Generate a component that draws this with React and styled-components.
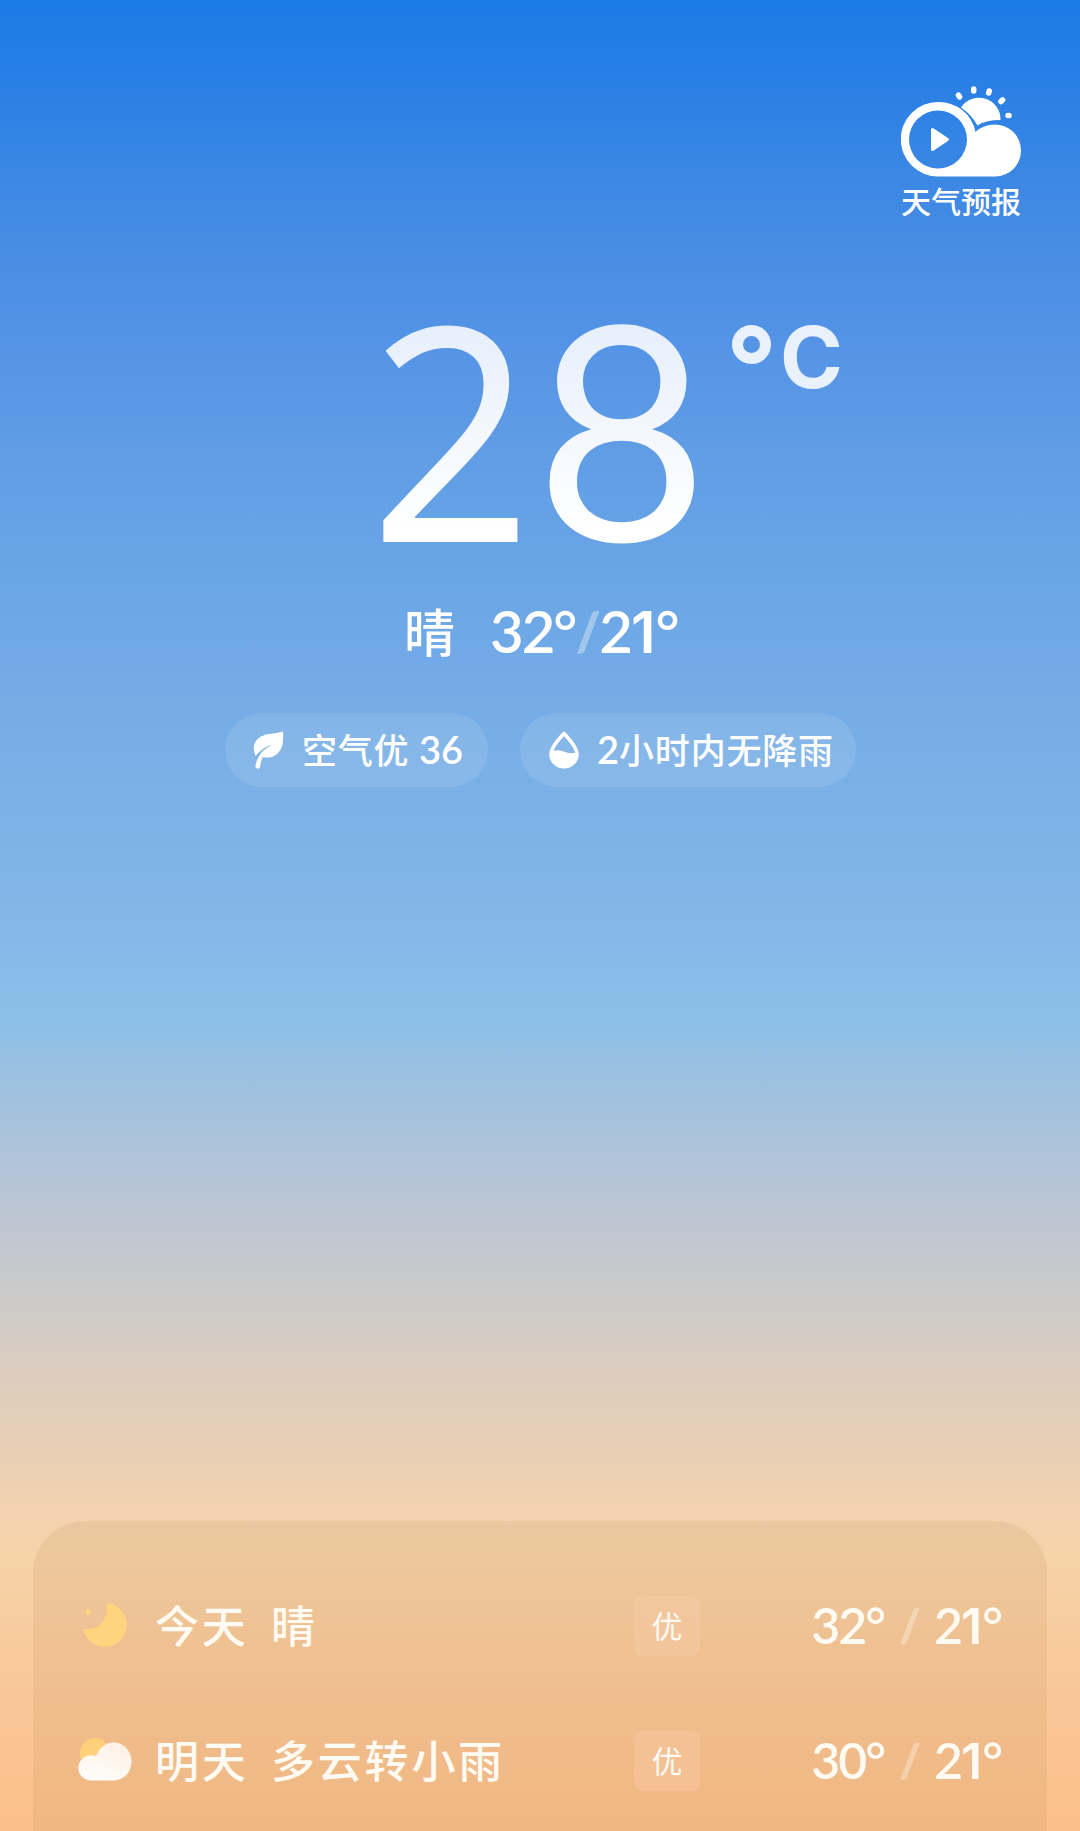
import styled, { createGlobalStyle } from "styled-components";

const GlobalStyle = createGlobalStyle`
  * {
    box-sizing: border-box;
  }
  body {
    margin: 0;
    font-family: Lato, "Noto Sans CJK SC", sans-serif;
  }
`;

const Container = styled.div`
  width: 1080px;
  height: 1831px;
  overflow: hidden;
  display: flex;
  flex-direction: column;
  color: white;
  background: linear-gradient(
    to bottom,
    #1b7be6 0px,
    #2a80e5 90px,
    #3a87e4 170px,
    #488de4 250px,
    #5594e6 345px,
    #609de5 450px,
    #6ba6e6 590px,
    #78aee6 740px,
    #82b6e7 900px,
    #8cbfe8 1020px,
    #9fc1df 1090px,
    #b0c4d8 1160px,
    #c2c7d0 1240px,
    #cccbc9 1300px,
    #dccdbf 1370px,
    #e6cfb6 1440px,
    #f2d2b0 1505px,
    #f6d3aa 1550px,
    #f9c898 1680px,
    #fbbf8b 1831px
  );
`;

const Header = styled.header`
  display: flex;
  justify-content: flex-end;
  height: 300px;
  padding: 84px 58px 0 0;
`;

const Forecast = styled.div`
  width: 121px;
  display: flex;
  flex-direction: column;
`;

const ForecastLabel = styled.span`
  margin-top: 3px;
  font-size: 30px;
  line-height: 40px;
  font-weight: 500;
  white-space: nowrap;
`;

const Current = styled.section`
  display: flex;
  height: 290px;
  padding-left: 369px;
`;

const Degrees = styled.div`
  display: flex;
  width: 351px;
`;

const BigDigit = styled.span`
  width: 166px;
  height: 264px;
  margin-top: -6px;
  font-family: ${(props) => props.$font}, sans-serif;
  font-size: 299px;
  line-height: 264px;
  white-space: nowrap;
  color: transparent;
  background: linear-gradient(to bottom, #e6effc 30px, #fff 236px);
  background-clip: text;
  transform: scaleX(${(props) => props.$stretch || 1});
  transform-origin: 14px 0;
`;

const Unit = styled.div`
  display: flex;
  padding-top: 8px;
  font-family: Inter, sans-serif;
  font-size: 85px;
  line-height: 100px;
  font-weight: 700;
  color: #e9f1fd;
`;

const Ring = styled.i`
  width: 39px;
  height: 39px;
  margin: 17px 9px 0 12px;
  border: 11px solid #e9f1fd;
  border-radius: 50%;
`;

const Summary = styled.section`
  display: flex;
  align-items: center;
  height: 86px;
  padding-left: 404px;
  font-weight: 500;
`;

const Condition = styled.span`
  width: 86px;
  font-size: 51px;
  line-height: 60px;
`;

const Range = styled.div`
  display: flex;
  font-size: ${(props) => props.$size}px;
  line-height: 70px;
  padding-bottom: ${(props) => props.$lift || 0}px;
  font-weight: 600;
  letter-spacing: -2px;
  white-space: nowrap;
`;

const One = styled.span`
  font-family: Inter, sans-serif;
  letter-spacing: 0;
`;

const Slash = styled.span`
  width: ${(props) => props.$width}px;
  font-size: 0.9em;
  font-weight: 800;
  text-align: center;
  opacity: 0.35;
`;

const Chips = styled.section`
  display: flex;
  gap: 32px;
  padding: 37px 0 0 225px;
`;

const Chip = styled.div`
  display: flex;
  align-items: center;
  width: ${(props) => props.$width}px;
  height: 74px;
  padding-left: 28px;
  border-radius: 37px;
  background-color: rgba(255, 255, 255, 0.1);
  font-size: 35px;
  line-height: 50px;
  font-weight: 500;
  letter-spacing: 0.8px;
  white-space: nowrap;

  svg {
    margin-right: 17px;
    flex-shrink: 0;
  }
`;

const ChipText = styled.span`
  margin-top: -2px;
`;

const Figure = styled.span`
  font-size: 38px;
  font-weight: 600;
  letter-spacing: 0;
`;

const Days = styled.section`
  margin: auto 33px 0;
  height: 310px;
  padding: 37px 46px 0 45px;
  border-radius: 52px 52px 0 0;
  background-color: rgba(190, 140, 85, 0.15);
  color: #fffaf2;
`;

const Day = styled.div`
  display: flex;
  align-items: center;
  height: 135px;
`;

const DayIcon = styled.div`
  width: 77px;
  height: 54px;
`;

const DayName = styled.span`
  width: 116px;
  font-size: 44px;
  line-height: 60px;
  font-weight: 500;
  letter-spacing: 2.8px;
  white-space: nowrap;
`;

const DayText = styled(DayName)`
  width: 363px;
`;

const Quality = styled.span`
  width: 66px;
  height: 60px;
  border-radius: 8px;
  background-color: rgba(255, 210, 180, 0.28);
  font-size: 31px;
  line-height: 60px;
  text-align: center;
`;

const DayRange = styled.div`
  flex: 1;
  display: flex;
  justify-content: flex-end;
`;

const ForecastLogo = () => (
  <svg width="121" height="94" viewBox="0 0 121 94" fill="#fff">
    <path d="M60 23.500A21.500 21.500 0 0 1 99.500 36Q84 36 76.500 41.500Q70 30 60 23.500Z" />
    <g stroke="#fff" strokeWidth="5.500" strokeLinecap="round">
      <path d="M57.500 11.200l1 1.600M72.700 5v2M88.200 7l-.5 2M101.500 16l-1.500 1.500M107 31.500h1" />
    </g>
    <path d="M37 18A37 37 0 0 1 74.500 48Q82 40.500 94 40.500A26 26 0 0 1 94 92.500H37A37 37 0 0 1 37 18ZM37 26.500A29 29 0 1 0 37 84.500A29 29 0 0 0 37 26.500Z" fillRule="evenodd" />
    <path d="M31.500 45.500L46.500 55.500L31.500 65.500Z" stroke="#fff" strokeWidth="3" strokeLinejoin="round" />
  </svg>
);

const Leaf = () => (
  <svg width="32" height="40" viewBox="0 0 32 40">
    <path d="M30 1.500C30.800 12 29.500 21 22 25.500C18 28 13 28 9.800 27C8.500 30 7.500 33 6.800 38Q4 40 2.300 37C3 31 6 24.500 11 20Q15 16.500 19 15Q11 16 2.500 26C-.5 18 0 11.500 8 6.500C14 3 23 4 30 1.500Z" fill="#fff" />
  </svg>
);

const Drop = () => (
  <svg width="32" height="40" viewBox="0 0 32 40">
    <path d="M16 3.500C11 9 3 17 3 24A13 12.800 0 0 0 29 24C29 17 21 9 16 3.500Z" fill="none" stroke="#fff" strokeWidth="3.600" strokeLinejoin="round" />
    <path d="M2 22.500Q8 18.500 15.500 21.500T30 22V25A14 13 0 0 1 2 25Z" fill="#fff" />
  </svg>
);

const Moon = () => (
  <svg width="54" height="54" viewBox="0 0 54 54" fill="#ffd47f">
    <path d="M32 4.500A22 22 0 1 1 5 29.500Q15 32 23 24.500Q31 17 28.500 7.500Q29 3.500 32 4.500Z" />
    <path d="M10 9Q11 12.200 14 13Q11 13.800 10 17Q9 13.800 6 13Q9 12.200 10 9Z" />
  </svg>
);

const Cloud = () => (
  <svg width="54" height="54" viewBox="0 0 54 54">
    <defs>
      <linearGradient id="cloud" x1="0.900" y1="0" x2="0.300" y2="1">
        <stop offset="0" stopColor="#fdf0e3" />
        <stop offset="1" stopColor="#fffdfa" />
      </linearGradient>
    </defs>
    <circle cx="17" cy="19" r="15" fill="#ffd07a" />
    <path d="M13 46.500A12.600 12.600 0 0 1 13 21.300Q16 21.300 18 22C22 13 28 8.500 36 8.500A17.500 19 0 0 1 36 46.500Z" fill="url(#cloud)" />
  </svg>
);

// Lato's 1 has a foot, so that digit is set in Inter
const Temp = ({ value }) => (
  <span>
    {[...String(value)].map((digit, i) => (digit === "1" ? <One key={i}>1</One> : digit))}°
  </span>
);

const days = [
  { name: "今天", text: "晴", icon: <Moon />, high: 32, low: 21 },
  { name: "明天", text: "多云转小雨", icon: <Cloud />, high: 30, low: 21 },
];

const App = () => {
  return (
    <Container>
      <GlobalStyle />
      <Header>
        <Forecast>
          <ForecastLogo />
          <ForecastLabel>天气预报</ForecastLabel>
        </Forecast>
      </Header>
      <Current>
        <Degrees>
          <BigDigit $font="'Noto Sans'" $stretch={0.95}>2</BigDigit>
          <BigDigit $font="Lato">8</BigDigit>
        </Degrees>
        <Unit>
          <Ring />C
        </Unit>
      </Current>
      <Summary>
        <Condition>晴</Condition>
        <Range $size={58} $lift={3}>
          <Temp value={32} />
          <Slash $width={24}>/</Slash>
          <Temp value={21} />
        </Range>
      </Summary>
      <Chips>
        <Chip $width={263}>
          <Leaf />
          <ChipText>
            空气优 <Figure>36</Figure>
          </ChipText>
        </Chip>
        <Chip $width={336}>
          <Drop />
          <ChipText>
            <Figure>2</Figure>小时内无降雨
          </ChipText>
        </Chip>
      </Chips>
      <Days>
        {days.map((day) => (
          <Day key={day.name}>
            <DayIcon>{day.icon}</DayIcon>
            <DayName>{day.name}</DayName>
            <DayText>{day.text}</DayText>
            <Quality>优</Quality>
            <DayRange>
              <Range $size={50}>
                <Temp value={day.high} />
                <Slash $width={50}>/</Slash>
                <Temp value={day.low} />
              </Range>
            </DayRange>
          </Day>
        ))}
      </Days>
    </Container>
  );
};

export default App;
